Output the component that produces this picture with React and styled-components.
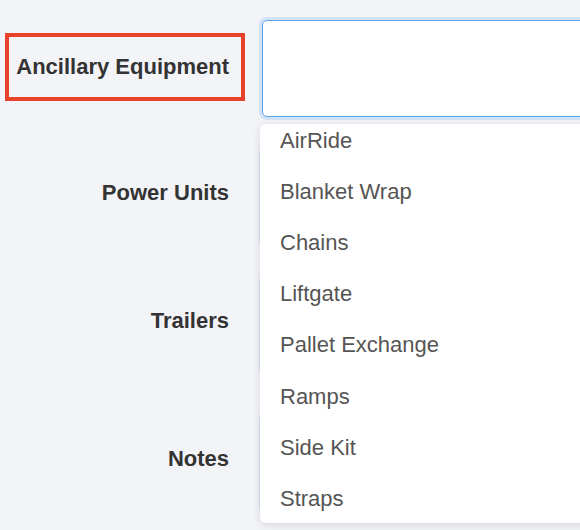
import React from "react"
import styled, { createGlobalStyle } from "styled-components"

const GlobalStyle = createGlobalStyle`
  html, body {
    margin: 0;
    padding: 0;
    background: #f3f4f8;
    overflow: hidden;
    font-family: "Liberation Sans", Arial, Helvetica, sans-serif;
  }
`

const options = [
  "AirRide",
  "Blanket Wrap",
  "Chains",
  "Liftgate",
  "Pallet Exchange",
  "Ramps",
  "Side Kit",
  "Straps",
]

const rows = [
  { label: "Power Units", height: 128 },
  { label: "Trailers", height: 138 },
  { label: "Notes", height: 100 },
]

const App = () => {
  return (
    <>
      <GlobalStyle />
      <Form>
        <Row height={128}>
          <LabelCell>
            <Highlight>
              <Label>Ancillary Equipment</Label>
            </Highlight>
          </LabelCell>
          <Field>
            <Input />
            <Dropdown>
              <List>
                {options.map((item) => (
                  <Option key={item}>{item}</Option>
                ))}
              </List>
            </Dropdown>
          </Field>
        </Row>
        {rows.map((row) => (
          <Row key={row.label} height={row.height}>
            <LabelCell pad>
              <Label>{row.label}</Label>
            </LabelCell>
            <Field>
              <Input />
            </Field>
          </Row>
        ))}
      </Form>
    </>
  )
}

export default App

const Form = styled.div`
  display: flex;
  flex-direction: column;
  padding-top: 20px;
  width: 580px;
  height: 510px;
  overflow: hidden;
`

const Row = styled.div`
  display: grid;
  grid-template-columns: 245px 1fr;
  column-gap: 17px;
  flex: none;
  height: ${(p) => p.height}px;
`

const LabelCell = styled.div`
  display: flex;
  justify-content: flex-end;
  align-items: flex-start;
  padding-top: ${(p) => (p.pad ? "32px" : "13px")};
  padding-right: ${(p) => (p.pad ? "16px" : "0")};
`

const Highlight = styled.div`
  box-sizing: border-box;
  width: 240px;
  height: 68px;
  border: 4px solid #e8432a;
  display: flex;
  align-items: center;
  justify-content: flex-end;
  padding-right: 12px;
`

const Label = styled.span`
  font-size: 22px;
  font-weight: 700;
  color: #333;
  line-height: 26px;
  white-space: nowrap;
`

const Field = styled.div`
  position: relative;
  margin-right: -40px;
`

const Input = styled.div`
  box-sizing: border-box;
  height: 97px;
  background: #fff;
  border: 1px solid #5ea2f2;
  border-radius: 5px;
  box-shadow: 0 0 0 3px rgba(120, 170, 240, 0.25);
`

const Dropdown = styled.div`
  position: absolute;
  top: 104px;
  left: -2px;
  right: 0;
  height: 399px;
  background: #fff;
  border-radius: 6px;
  box-shadow: 0 2px 10px rgba(0, 0, 0, 0.12);
  overflow: hidden;
  z-index: 10;
`

const List = styled.ul`
  list-style: none;
  margin: -9px 0 0;
  padding: 0;
`

const Option = styled.li`
  height: 51.2px;
  display: flex;
  align-items: center;
  padding-left: 20px;
  font-size: 22px;
  color: #555;
`
